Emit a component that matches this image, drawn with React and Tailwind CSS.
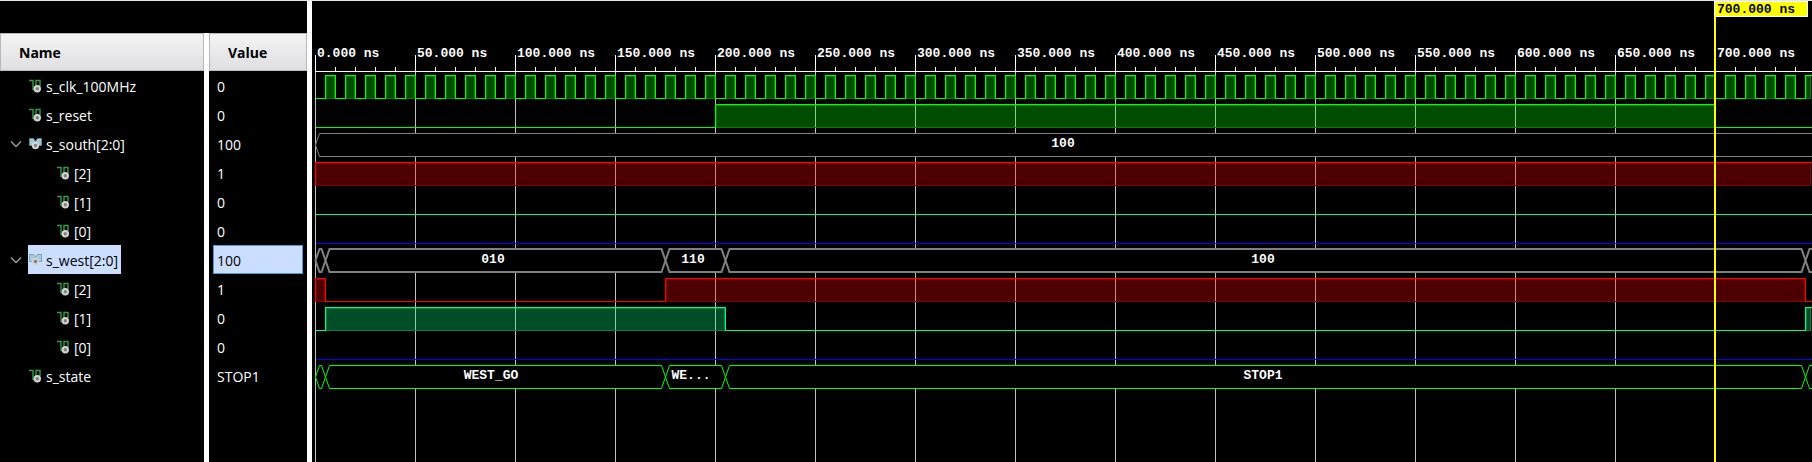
const GREEN = "#00ff00";
const RED = "#ff0000";
const MINT = "#00ff80";
const BLUE = "#0000ff";
const GRAY = "#808080";

const ROW = 29;
const RULER = 70;
const ORIGIN = 3;
const PX_PER_NS = 2;
const VIEW_END = 748;
const toX = (ns) => ORIGIN + ns * PX_PER_NS;

const clockHighs = Array.from({ length: 75 }, (_, i) => [5 + i * 10, 10 + i * 10]);
const stateChanges = [0, 5, 175, 205, 745];

const signals = [
  { name: "s_clk_100MHz", value: "0", wave: { color: GREEN, highs: clockHighs } },
  { name: "s_reset", value: "0", wave: { color: GREEN, highs: [[200, 700]] } },
  { name: "s_south[2:0]", value: "100", group: true, bus: { color: GRAY, changes: [0], labels: [["100", 374]] } },
  { name: "[2]", value: "1", child: true, wave: { color: RED, highs: [[0, 760]] } },
  { name: "[1]", value: "0", child: true, wave: { color: MINT, highs: [] } },
  { name: "[0]", value: "0", child: true, wave: { color: BLUE, highs: [] } },
  {
    name: "s_west[2:0]",
    value: "100",
    group: true,
    selected: true,
    bus: { color: GRAY, thick: true, changes: stateChanges, labels: [["010", 89], ["110", 189], ["100", 474]] },
  },
  { name: "[2]", value: "1", child: true, wave: { color: RED, highs: [[0, 5], [175, 745]] } },
  { name: "[1]", value: "0", child: true, wave: { color: MINT, highs: [[5, 205], [745, 760]] } },
  { name: "[0]", value: "0", child: true, wave: { color: BLUE, highs: [] } },
  {
    name: "s_state",
    value: "STOP1",
    bus: { color: GREEN, changes: stateChanges, labels: [["WEST_GO", 88], ["WE...", 188], ["STOP1", 474]] },
  },
];

function BitIcon() {
  return (
    <svg className="h-4 w-3 shrink-0" viewBox="0 0 12 16" aria-hidden="true">
      <path d="M0 2.500h4v9.500M4 11.500H7V2.500h4V8" fill="none" stroke="#2f9e44" strokeWidth="1.400" />
      <circle cx="8.300" cy="10.800" r="2.700" fill="#808080" stroke="#d4d4d4" strokeWidth="2" />
    </svg>
  );
}

function BusIcon({ selected }) {
  return (
    <svg className="h-4 w-3 shrink-0 overflow-visible" viewBox="0 0 12 16" aria-hidden="true">
      <path
        d="M.5 2.500H4.500L6.500 5.500L8.500 2.500H12.500V9.500H.5Z"
        fill={selected ? "#9fcfe0" : "#9ccbe0"}
        stroke={selected ? "#8799a0" : "#6f8792"}
        strokeWidth=".9"
      />
      <circle cx="6.500" cy="9.500" r="2.700" fill="#808080" stroke="#d4d4d4" strokeWidth="2" />
    </svg>
  );
}

function SignalTable() {
  return (
    <table className="h-full w-full table-fixed border-separate border-spacing-0 text-left text-sm text-white">
      <colgroup>
        <col className="w-[204px]" />
        <col className="w-[5px]" />
        <col />
      </colgroup>
      <thead>
        <tr className="h-[38px] text-black">
          <th className="border border-[#b8b8b8] bg-linear-to-b from-[#f4f4f4] to-[#dfdfe3] pt-0.5 pr-0 pb-0 pl-[18px] font-bold">
            Name
          </th>
          <td className="bg-white p-0" />
          <th className="border border-[#b8b8b8] bg-linear-to-b from-[#f4f4f4] to-[#dfdfe3] pt-0.5 pr-0 pb-0 pl-[18px] font-bold">
            Value
          </th>
        </tr>
      </thead>
      <tbody>
        {signals.map((s, i) => (
          <tr key={i} className="h-[29px]">
            <td className="p-0">
              <div className={s.child ? "flex h-[29px] items-center pl-14" : "flex h-[29px] items-center"}>
                {!s.child && (
                  <span className="flex w-7 shrink-0 justify-center pl-1">
                    {s.group && (
                      <button type="button" aria-label={"Collapse " + s.name} aria-expanded="true">
                        <svg className="h-3 w-3" viewBox="0 0 12 12" aria-hidden="true">
                          <path d="M1 3.500l5 5 5-5" fill="none" stroke="#9a9a9a" strokeWidth="1.500" />
                        </svg>
                      </button>
                    )}
                  </span>
                )}
                <span
                  className={
                    s.selected
                      ? "flex h-full items-center gap-[5px] bg-[#cbdeff] pr-[3px] pl-px text-black"
                      : "flex h-full items-center gap-[5px] pl-px"
                  }
                >
                  {s.group ? <BusIcon selected={s.selected} /> : <BitIcon />}
                  <span className="pt-0.5">{s.name}</span>
                </span>
              </div>
            </td>
            <td className="bg-white p-0" />
            <td className="py-0 pr-1 pl-1">
              <div
                className={
                  s.selected
                    ? "flex h-[29px] items-center border border-[#4a9ad4] bg-[#cbdeff] px-[3px] pt-0.5 text-black"
                    : "flex h-[29px] items-center px-1 pt-0.5"
                }
              >
                {s.value}
              </div>
            </td>
          </tr>
        ))}
        <tr>
          <td className="p-0" />
          <td className="bg-white p-0" />
          <td className="p-0" />
        </tr>
      </tbody>
    </table>
  );
}

function BitWave({ y, color, highs }) {
  const top = y + 4;
  const low = y + 27;
  let line = "M" + (ORIGIN + 0.5) + " " + (low + 0.5);
  highs.forEach(([a, b]) => {
    line += "H" + (toX(a) + 0.5) + "V" + (top + 0.5) + "H" + (toX(b) + 0.5) + "V" + (low + 0.5);
  });
  line += "H1700";
  return (
    <g shapeRendering="crispEdges">
      <path d={line} fill="none" stroke={color} />
      {highs.map(([a, b]) => {
        const left = toX(a) + 1;
        const right = Math.min(toX(b), toX(VIEW_END));
        return (
          <g key={a}>
            <rect x={left} y={low} width={right - left} height="1" fill="#000" />
            <rect x={left} y={top + 1} width={right - left} height={low - top} fill={color} fillOpacity=".3" />
            <rect
              x={left + 0.5}
              y={top + 1.5}
              width={right - left - 1}
              height={low - top - 1}
              fill="none"
              stroke={color}
              strokeOpacity=".3"
            />
          </g>
        );
      })}
    </g>
  );
}

function BusWave({ y, color, thick, changes, labels }) {
  const shift = thick ? 0 : 0.5;
  const top = y + 4 + shift;
  const low = y + 27 + shift;
  const mid = (top + low) / 2;
  return (
    <g>
      {changes.map((t, i) => {
        const a = toX(t) + 0.5;
        const last = i === changes.length - 1;
        const b = last ? 1700 : toX(changes[i + 1]) + 0.5;
        return (
          <path
            key={t}
            d={`M${a} ${mid}L${a + 4} ${top}H${b - 4}L${b} ${mid}L${b - 4} ${low}H${a + 4}Z`}
            fill="#000"
            stroke={color}
            strokeWidth={thick ? 2 : 1}
          />
        );
      })}
      {labels.map(([text, at]) => (
        <text key={at} x={toX(at)} y={y + 18} textAnchor="middle" fill="#fff">
          {text}
        </text>
      ))}
    </g>
  );
}

function Waveform() {
  const majors = Array.from({ length: 15 }, (_, i) => i * 50);
  const minors = Array.from({ length: 75 }, (_, i) => i * 10);
  return (
    <svg
      className="h-full w-full font-['Liberation_Mono',monospace] text-[13px] font-bold"
      role="img"
      aria-label="Signal waveforms"
    >
      <g fill="#c0c0c0">
        {majors.map((t) => (
          <rect key={t} x={toX(t)} y={RULER} width="1" height="100%" />
        ))}
      </g>
      <g fill="#fff">
        {minors.map((t) => (
          <rect key={t} x={toX(t)} y={RULER - 4} width="1" height="4" />
        ))}
        {majors.map((t) => (
          <g key={t}>
            <rect x={toX(t)} y={RULER - 16} width="1" height="16" />
            <text x={toX(t) + 2} y={RULER - 14}>
              {t + ".000 ns"}
            </text>
          </g>
        ))}
        <rect x={ORIGIN} y={RULER} width="100%" height="1" />
      </g>
      {signals.map((s, i) =>
        s.bus ? (
          <BusWave key={i} y={RULER + i * ROW} {...s.bus} />
        ) : (
          <BitWave key={i} y={RULER + i * ROW} {...s.wave} />
        )
      )}
      <rect x={toX(700) - 1} y="0" width="2" height="100%" fill="#ffff00" />
      <rect x={toX(700) - 0.5} y=".5" width="93" height="15" fill="#ffff00" stroke="#fff" />
      <text x={toX(700) + 2} y="12" fill="#000">
        700.000 ns
      </text>
    </svg>
  );
}

export default function App() {
  return (
    <main className="flex h-screen min-h-[400px] overflow-hidden border-t border-[#e4e8e8] bg-black font-['Open_Sans','Noto_Sans',sans-serif]">
      <section aria-label="Signals" className="grid w-[307px] shrink-0 grid-rows-[32px_1fr]">
        <div />
        <SignalTable />
      </section>
      <div className="w-[5px] shrink-0 bg-white" />
      <section aria-label="Waveforms" className="min-w-0 flex-1">
        <Waveform />
      </section>
    </main>
  );
}
